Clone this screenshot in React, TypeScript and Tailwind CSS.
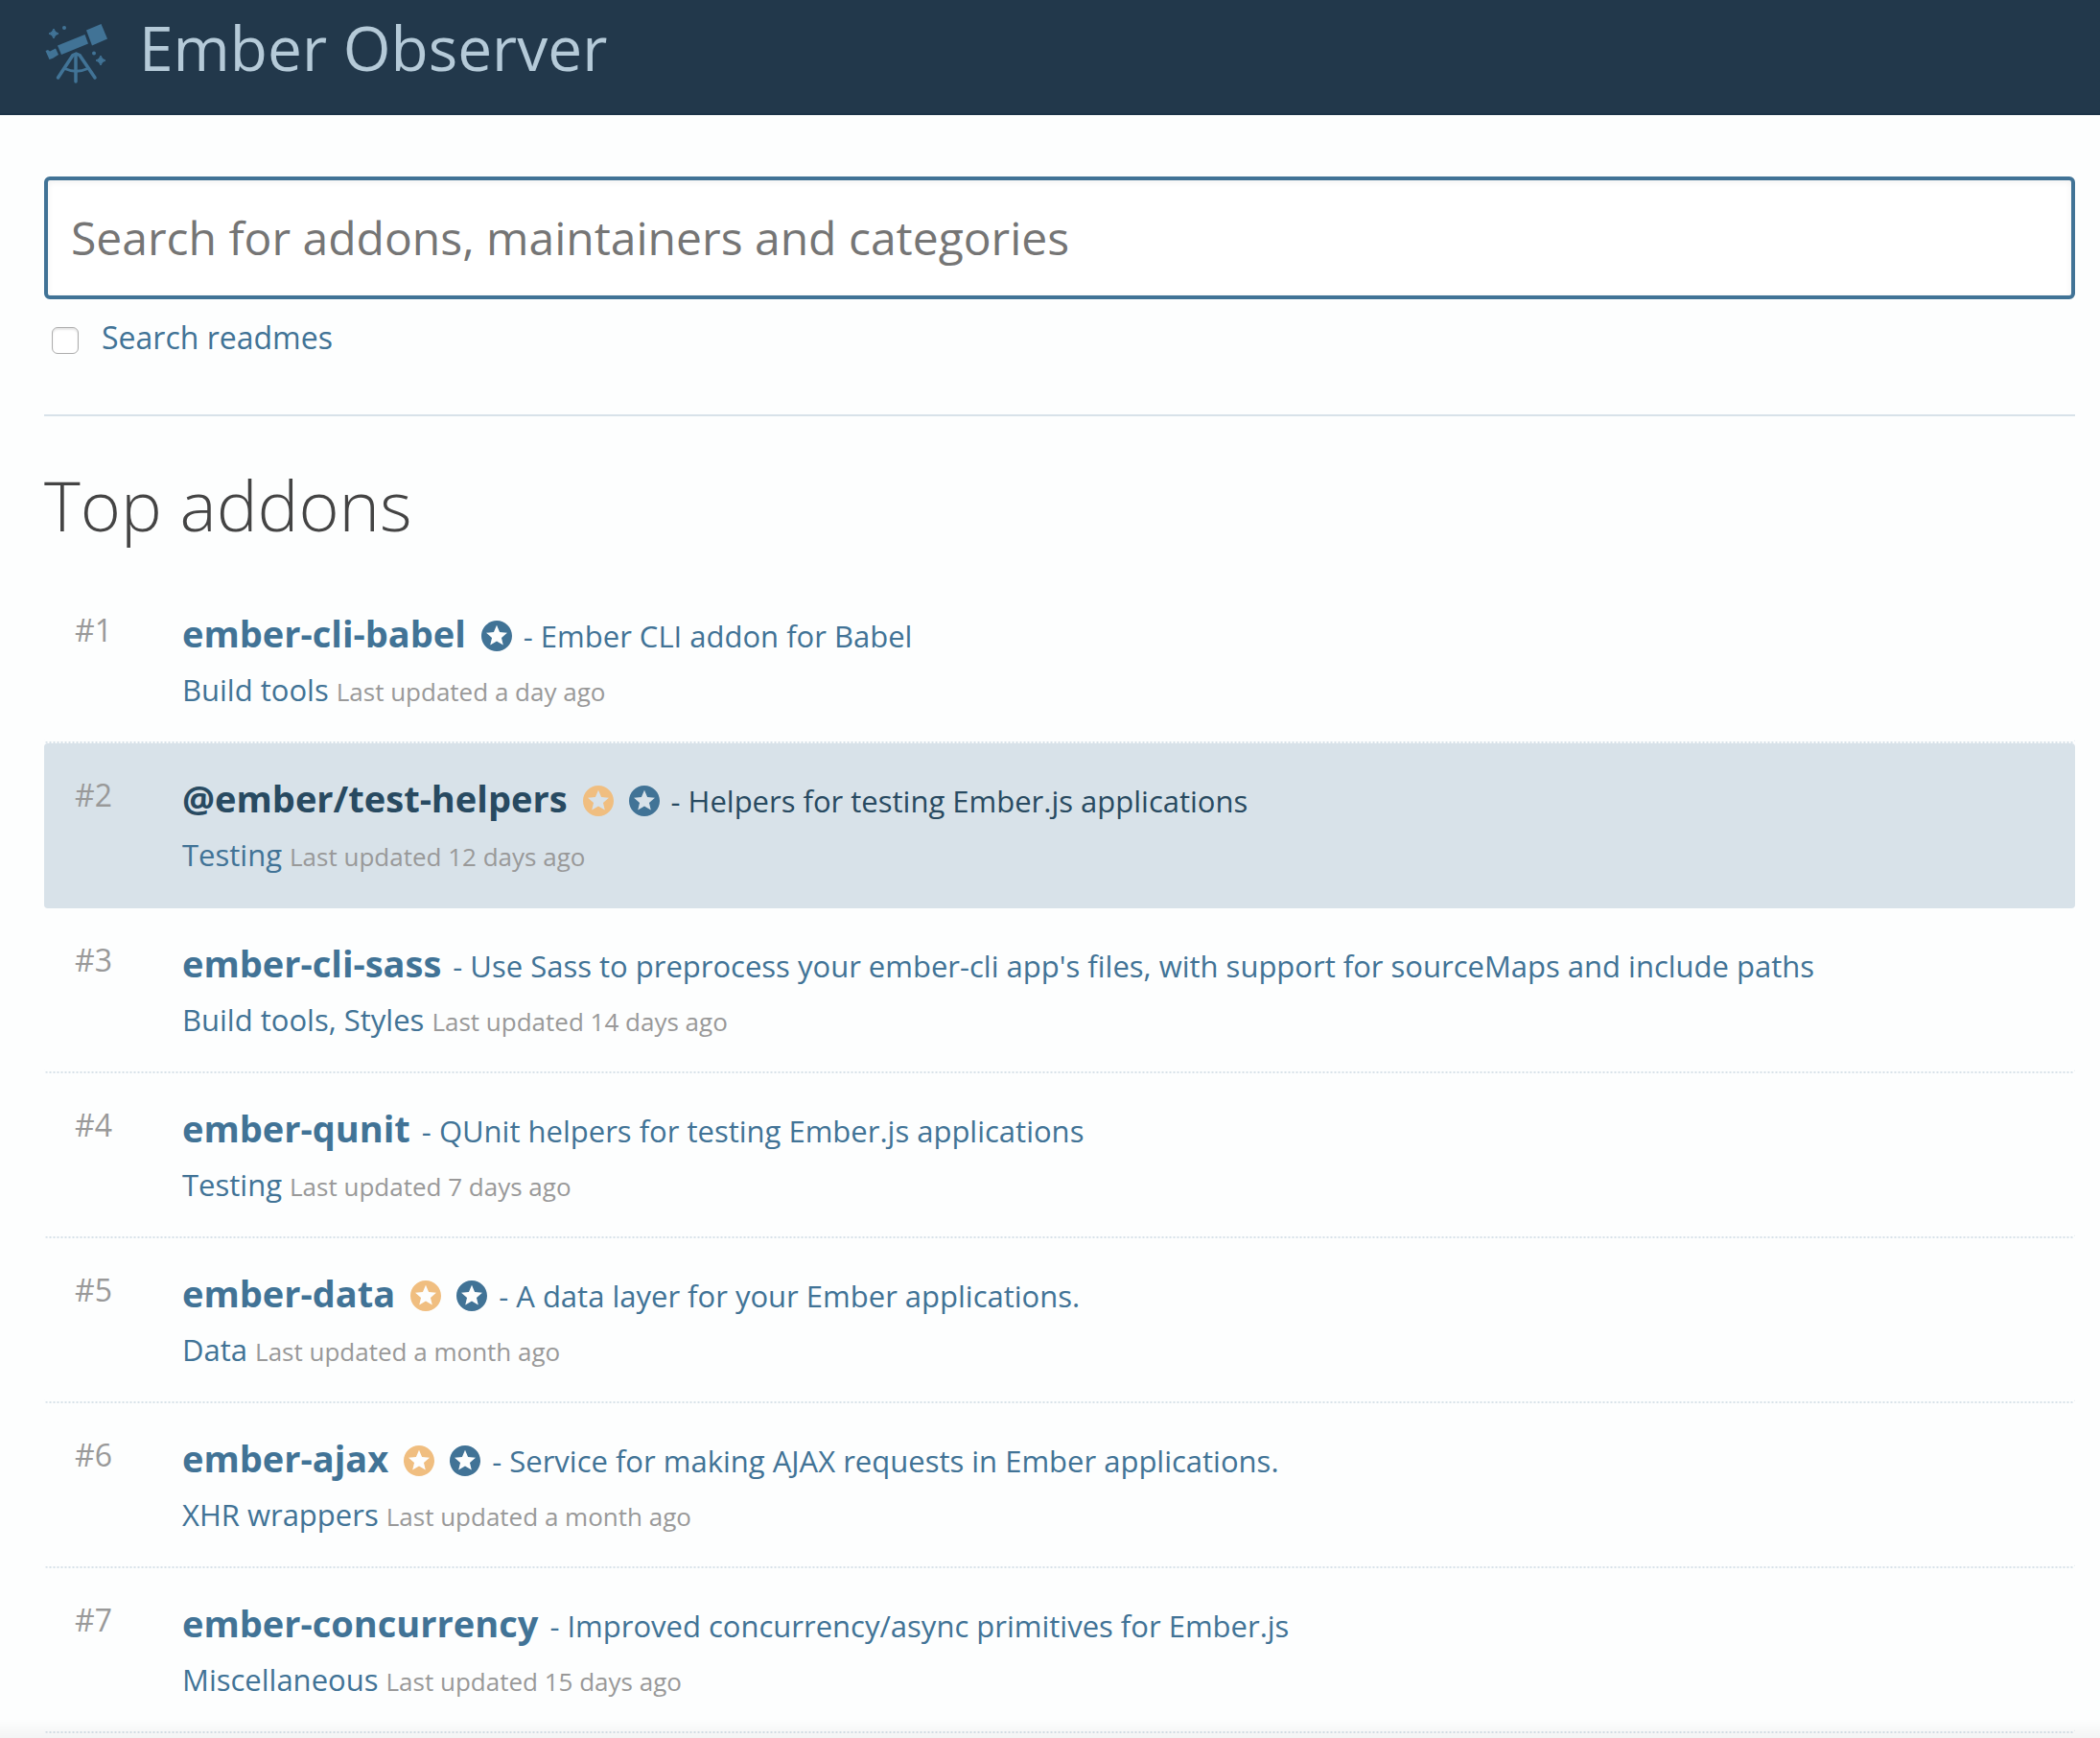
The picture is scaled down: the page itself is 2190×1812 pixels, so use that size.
import React from "react";

type Badge = "gold" | "blue";

type Addon = {
  name: string;
  badges: Badge[];
  description: string;
  categories: string[];
  updated: string;
  active?: boolean;
};

const addons: Addon[] = [
  { name: "ember-cli-babel", badges: ["blue"], description: "Ember CLI addon for Babel", categories: ["Build tools"], updated: "a day ago" },
  { name: "@ember/test-helpers", badges: ["gold", "blue"], description: "Helpers for testing Ember.js applications", categories: ["Testing"], updated: "12 days ago", active: true },
  { name: "ember-cli-sass", badges: [], description: "Use Sass to preprocess your ember-cli app's files, with support for sourceMaps and include paths", categories: ["Build tools", "Styles"], updated: "14 days ago" },
  { name: "ember-qunit", badges: [], description: "QUnit helpers for testing Ember.js applications", categories: ["Testing"], updated: "7 days ago" },
  { name: "ember-data", badges: ["gold", "blue"], description: "A data layer for your Ember applications.", categories: ["Data"], updated: "a month ago" },
  { name: "ember-ajax", badges: ["gold", "blue"], description: "Service for making AJAX requests in Ember applications.", categories: ["XHR wrappers"], updated: "a month ago" },
  { name: "ember-concurrency", badges: [], description: "Improved concurrency/async primitives for Ember.js", categories: ["Miscellaneous"], updated: "15 days ago" },
];

function StarBadge({ kind }: { kind: Badge }) {
  return (
    <svg
      viewBox="2 2 20 20"
      aria-hidden="true"
      className={
        kind === "gold"
          ? "mt-1.5 size-8 shrink-0 fill-[#f0be80]"
          : "mt-1.5 size-8 shrink-0 fill-[#417396]"
      }
    >
      <path d="M11.99 2C6.47 2 2 6.48 2 12s4.47 10 9.99 10C17.52 22 22 17.52 22 12S17.52 2 11.99 2zm4.24 16L12 15.45 7.77 18l1.12-4.81-3.73-3.23 4.92-.42L12 5l1.92 4.53 4.92.42-3.73 3.23L16.23 18z" />
    </svg>
  );
}

function Telescope() {
  return (
    <svg viewBox="0 1 66 64" aria-hidden="true" className="h-16 w-[66px] shrink-0 fill-[#417396]">
      <path d="M43 8.500 58.500 2 65 17.500 49 24.500z" />
      <path d="M13 24.500 41.500 13 45 22.500 17 34z" />
      <path d="M0.500 30 3 29l2 1.500 6-3 3 6.500-5.500 3.500L7.500 38 4.500 39z" />
      <g fill="none" stroke="#417396" strokeWidth="3.500" strokeLinecap="round" strokeLinejoin="round">
        <path d="M13.500 58 29 34.500l3.500-1.500 3.500 1.500 16 23.500" />
        <path d="M32 34v28" />
        <path d="M20.500 48.500q12 5.500 24 0" strokeWidth="3" />
      </g>
      <path d="M9 7q1 4 5 5-4 1-5 5-1-4-5-5 4-1 5-5z" stroke="#417396" />
      <path d="M58 35q1 4 5 5-4 1-5 5-1-4-5-5 4-1 5-5z" stroke="#417396" />
      <circle cx="20" cy="6" r="2" />
      <circle cx="51" cy="32.500" r="2" />
    </svg>
  );
}

function AddonRow({ addon, rank }: { addon: Addon; rank: number }) {
  const tone = addon.active ? "text-[#284a61]" : "text-[#417396]";
  return (
    <li
      className={
        addon.active
          ? "flex rounded-sm border-b-2 border-[#d8e2e9] bg-[#d8e2e9] py-8 pl-8"
          : "flex rounded-sm border-b-2 border-dotted border-[#d8e2e9] py-8 pl-8"
      }
    >
      <span className="w-28 shrink-0 text-[32px] leading-[44px] text-[#999999]">#{rank}</span>
      <div className="flex min-w-0 flex-col gap-3">
        <a href="#" className={`flex items-baseline gap-3 ${tone}`}>
          <span className="flex items-center gap-4">
            <span className="text-[38px] leading-[50px] font-bold">{addon.name}</span>
            {addon.badges.map((kind) => (
              <StarBadge key={kind} kind={kind} />
            ))}
          </span>
          <span className="text-[31px] leading-[44px]">- {addon.description}</span>
        </a>
        <div className="text-[31px] leading-[44px] text-[#417396]">
          {addon.categories.map((category, i) => (
            <React.Fragment key={category}>
              {i > 0 && ", "}
              <a href="#">{category}</a>
            </React.Fragment>
          ))}{" "}
          <span className="text-[26px] leading-none text-[#999999]">Last updated {addon.updated}</span>
        </div>
      </div>
    </li>
  );
}

export default function App() {
  return (
    <div className="relative h-screen overflow-hidden bg-[#fdfefe] font-['Open_Sans',sans-serif]">
      <header className="flex h-[120px] items-start gap-8 border-b-2 border-[#1c3347] bg-[#22384b] pl-[47px]">
        <div className="pt-6">
          <Telescope />
        </div>
        <a href="#" className="text-[64px] leading-[100px] text-[#b5cad8]">Ember Observer</a>
      </header>
      <main className="pt-16 pr-[26px] pl-[46px]">
        <input
          type="search"
          aria-label="Search"
          placeholder="Search for addons, maintainers and categories"
          className="block h-32 w-full rounded-md border-4 border-[#417396] bg-white px-6 pb-0.5 text-[48px] shadow-[inset_0_2px_6px_rgba(0,0,0,0.06)] outline-none placeholder:text-[#757575]"
        />
        <div className="flex items-center gap-6 border-b-2 border-[#d8e2e9] pt-[18px] pb-[58px] pl-2">
          <input
            id="readmes"
            type="checkbox"
            className="mt-1.5 size-7 appearance-none rounded-md border border-[#adadad] bg-white shadow-[inset_0_2px_2px_rgba(0,0,0,0.1)]"
          />
          <label htmlFor="readmes" className="text-[32px] leading-[44px] text-[#417396]">Search readmes</label>
        </div>
        <h1 className="pt-[42px] pb-[27px] text-[72px] leading-[100px] font-light text-[#444444]">Top addons</h1>
        <ul>
          {addons.map((addon, i) => (
            <AddonRow key={addon.name} addon={addon} rank={i + 1} />
          ))}
        </ul>
      </main>
      <div className="pointer-events-none absolute inset-x-0 bottom-0 h-5 bg-linear-to-b from-transparent to-black/4" />
    </div>
  );
}
